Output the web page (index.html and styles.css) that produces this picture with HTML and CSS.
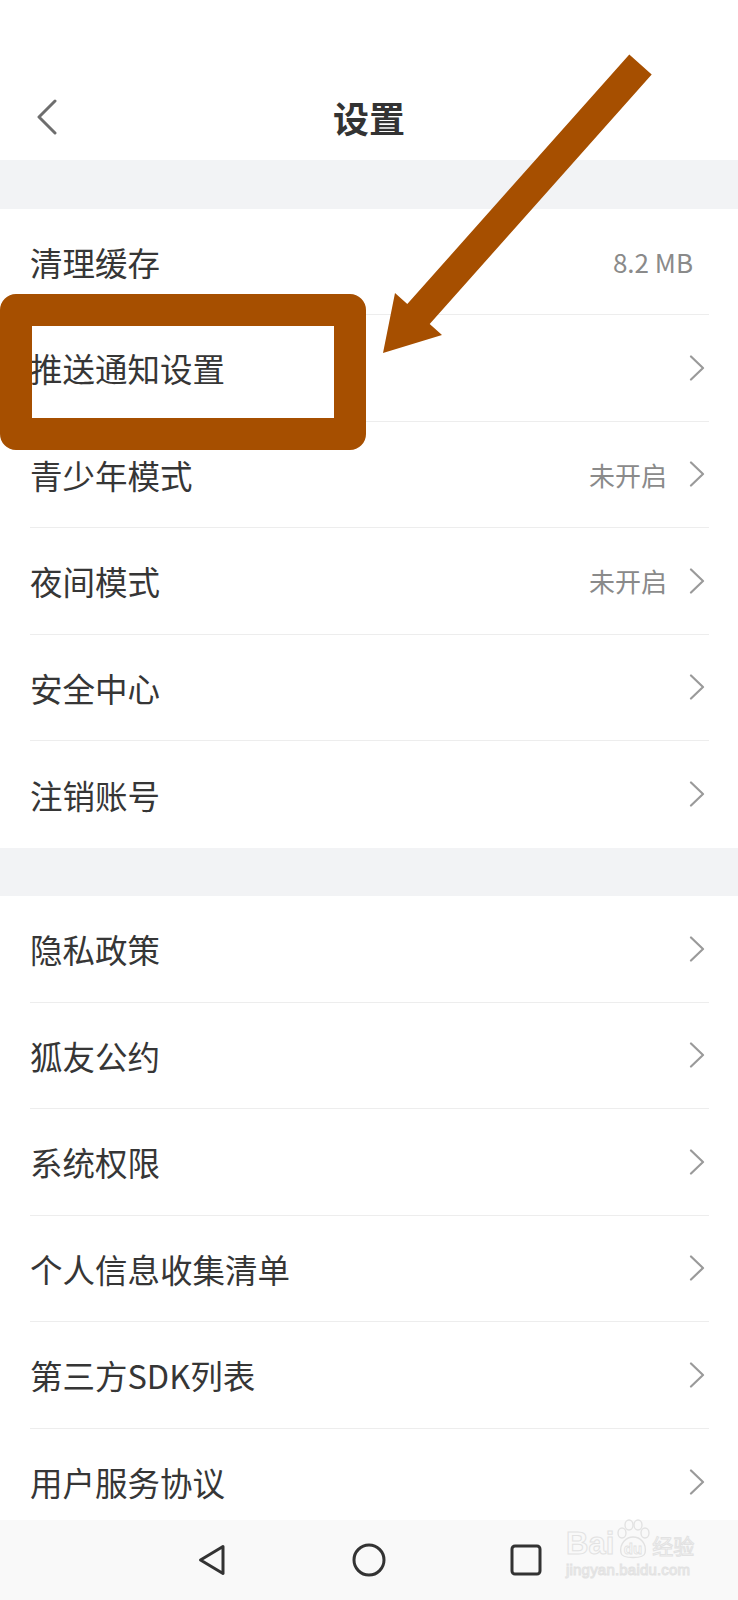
FILE: index.html
```html
<!DOCTYPE html>
<html lang="zh-CN">
<head>
    <meta charset="UTF-8">
    <meta name="viewport" content="width=device-width, initial-scale=1.0">
    <title>设置</title>
    <link rel="stylesheet" href="styles.css">
</head>
<body>
    <div class="screen">
        <div class="content">
            <header class="topbar">
                <div class="topbar-left">
                    <svg class="back" width="22" height="36" viewBox="0 0 22 36">
                        <path d="M19 2 L3 18 L19 34" />
                    </svg>
                </div>
                <h1 class="title">设置</h1>
                <div></div>
            </header>

            <div class="gap"></div>

            <ul class="group">
                <li class="row">
                    <span class="label">清理缓存</span>
                    <span class="value plain">8.2 MB</span>
                </li>
                <li class="row">
                    <span class="label">推送通知设置</span>
                    <svg class="chev" width="16" height="26" viewBox="0 0 16 26"><path d="M2 1.5 L14 13 L2 24.5" /></svg>
                </li>
                <li class="row">
                    <span class="label">青少年模式</span>
                    <span class="value">未开启</span>
                    <svg class="chev" width="16" height="26" viewBox="0 0 16 26"><path d="M2 1.5 L14 13 L2 24.5" /></svg>
                </li>
                <li class="row">
                    <span class="label">夜间模式</span>
                    <span class="value">未开启</span>
                    <svg class="chev" width="16" height="26" viewBox="0 0 16 26"><path d="M2 1.5 L14 13 L2 24.5" /></svg>
                </li>
                <li class="row">
                    <span class="label">安全中心</span>
                    <svg class="chev" width="16" height="26" viewBox="0 0 16 26"><path d="M2 1.5 L14 13 L2 24.5" /></svg>
                </li>
                <li class="row">
                    <span class="label">注销账号</span>
                    <svg class="chev" width="16" height="26" viewBox="0 0 16 26"><path d="M2 1.5 L14 13 L2 24.5" /></svg>
                </li>
            </ul>

            <div class="gap"></div>

            <ul class="group">
                <li class="row">
                    <span class="label">隐私政策</span>
                    <svg class="chev" width="16" height="26" viewBox="0 0 16 26"><path d="M2 1.5 L14 13 L2 24.5" /></svg>
                </li>
                <li class="row">
                    <span class="label">狐友公约</span>
                    <svg class="chev" width="16" height="26" viewBox="0 0 16 26"><path d="M2 1.5 L14 13 L2 24.5" /></svg>
                </li>
                <li class="row">
                    <span class="label">系统权限</span>
                    <svg class="chev" width="16" height="26" viewBox="0 0 16 26"><path d="M2 1.5 L14 13 L2 24.5" /></svg>
                </li>
                <li class="row">
                    <span class="label">个人信息收集清单</span>
                    <svg class="chev" width="16" height="26" viewBox="0 0 16 26"><path d="M2 1.5 L14 13 L2 24.5" /></svg>
                </li>
                <li class="row">
                    <span class="label">第三方SDK列表</span>
                    <svg class="chev" width="16" height="26" viewBox="0 0 16 26"><path d="M2 1.5 L14 13 L2 24.5" /></svg>
                </li>
                <li class="row">
                    <span class="label">用户服务协议</span>
                    <svg class="chev" width="16" height="26" viewBox="0 0 16 26"><path d="M2 1.5 L14 13 L2 24.5" /></svg>
                </li>
            </ul>
        </div>

        <nav class="navbar">
            <span class="nav-item">
                <svg width="30" height="32" viewBox="0 0 30 32"><polygon points="26,2.5 3.5,16 26,29.5" /></svg>
            </span>
            <span class="nav-item">
                <svg width="34" height="34" viewBox="0 0 34 34"><circle cx="17" cy="17" r="15" /></svg>
            </span>
            <span class="nav-item">
                <svg width="32" height="32" viewBox="0 0 32 32"><rect x="2" y="2" width="28" height="28" rx="3" /></svg>
            </span>
        </nav>

        <!-- annotation drawn over the screenshot -->
        <svg class="markup" width="738" height="480" viewBox="0 0 738 480">
            <polygon points="629.3,54.5 651.7,74.5 429.7,324 442,335 383,353 395,293 407.3,304" />
            <rect x="16" y="310" width="334" height="124" />
        </svg>

        <div class="watermark">
            <div class="wm-top">
                <span class="wm-bai">Bai</span>
                <svg class="wm-paw" width="36" height="42" viewBox="0 0 36 42">
                    <ellipse cx="7" cy="14" rx="4" ry="5" />
                    <ellipse cx="14" cy="6" rx="4" ry="5" />
                    <ellipse cx="23" cy="6" rx="4" ry="5" />
                    <ellipse cx="30" cy="14" rx="4" ry="5" />
                    <path d="M6 34 C4 24 12 18 18 18 C25 18 32 24 30 34 C29 40 7 40 6 34 Z" />
                    <text x="18" y="35" text-anchor="middle">du</text>
                </svg>
                <span class="wm-jy">经验</span>
            </div>
            <div class="wm-url">jingyan.baidu.com</div>
        </div>
    </div>
</body>
</html>
```

FILE: styles.css
```css
* {
    box-sizing: border-box;
}

body {
    margin: 0;
    background: #ffffff;
    font-family: "Noto Sans CJK SC", "Noto Sans", sans-serif;
    color: #333333;
}

.screen {
    position: relative;
    width: 738px;
    height: 1600px;
    display: flex;
    flex-direction: column;
    overflow: hidden;
}

.content {
    flex: 1;
    overflow: hidden;
}

.topbar {
    height: 160px;
    padding-top: 82px;
    display: grid;
    grid-template-columns: 1fr auto 1fr;
    align-items: start;
}

.topbar-left {
    height: 70px;
    padding-left: 36px;
    display: flex;
    align-items: center;
}

.back path {
    fill: none;
    stroke: #6e6e6e;
    stroke-width: 3;
    stroke-linecap: round;
    stroke-linejoin: round;
}

.title {
    margin: 0;
    height: 70px;
    line-height: 70px;
    font-size: 36px;
    font-weight: 700;
    color: #333333;
}

.gap {
    height: 48.5px;
    background: #f2f3f5;
}

.group {
    list-style: none;
    margin: 0;
    padding: 0;
}

.row {
    height: 106.5px;
    margin: 0 29px 0 30px;
    padding-right: 4px;
    display: flex;
    align-items: center;
    border-bottom: 1px solid #ededed;
}

.row:last-child {
    border-bottom: none;
}

.label {
    flex: 1;
    font-size: 32.5px;
    color: #363636;
    white-space: nowrap;
}

.value {
    font-size: 26px;
    color: #8a8a8a;
    margin-right: 22px;
}

.value.plain {
    margin-right: 12px;
}

.chev path {
    fill: none;
    stroke: #9a9a9a;
    stroke-width: 2.2;
    stroke-linecap: round;
    stroke-linejoin: round;
}

.navbar {
    height: 80px;
    flex-shrink: 0;
    background: #f9f9f9;
    display: grid;
    grid-template-columns: repeat(3, 157px);
    justify-content: center;
    justify-items: center;
    align-items: center;
}

.nav-item {
    display: flex;
}

.nav-item polygon,
.nav-item circle,
.nav-item rect {
    fill: none;
    stroke: #333333;
    stroke-width: 3;
    stroke-linejoin: round;
}

.markup {
    position: absolute;
    top: 0;
    left: 0;
    pointer-events: none;
}

.markup polygon {
    fill: #a64f00;
}

.markup rect {
    fill: none;
    stroke: #a64f00;
    stroke-width: 32;
    stroke-linejoin: round;
}

.watermark {
    position: absolute;
    left: 566px;
    top: 1517px;
    width: 134px;
    color: transparent;
    -webkit-text-stroke: 1px #e2e2e2;
    font-family: "Liberation Sans", sans-serif;
}

.wm-top {
    display: flex;
    align-items: flex-end;
    height: 44px;
}

.wm-bai {
    font-size: 31px;
    font-weight: 700;
    line-height: 34px;
}

.wm-paw {
    margin: 0 1px;
}

.wm-paw ellipse,
.wm-paw path {
    fill: none;
    stroke: #e2e2e2;
    stroke-width: 1.4;
}

.wm-paw text {
    font-size: 15px;
    font-weight: 700;
    fill: none;
    stroke: #e2e2e2;
    stroke-width: 0.8;
}

.wm-jy {
    font-family: "Noto Sans CJK SC", sans-serif;
    font-size: 21px;
    font-weight: 400;
    line-height: 32px;
}

.wm-url {
    font-size: 15px;
    line-height: 18px;
    letter-spacing: 0.2px;
}
```
